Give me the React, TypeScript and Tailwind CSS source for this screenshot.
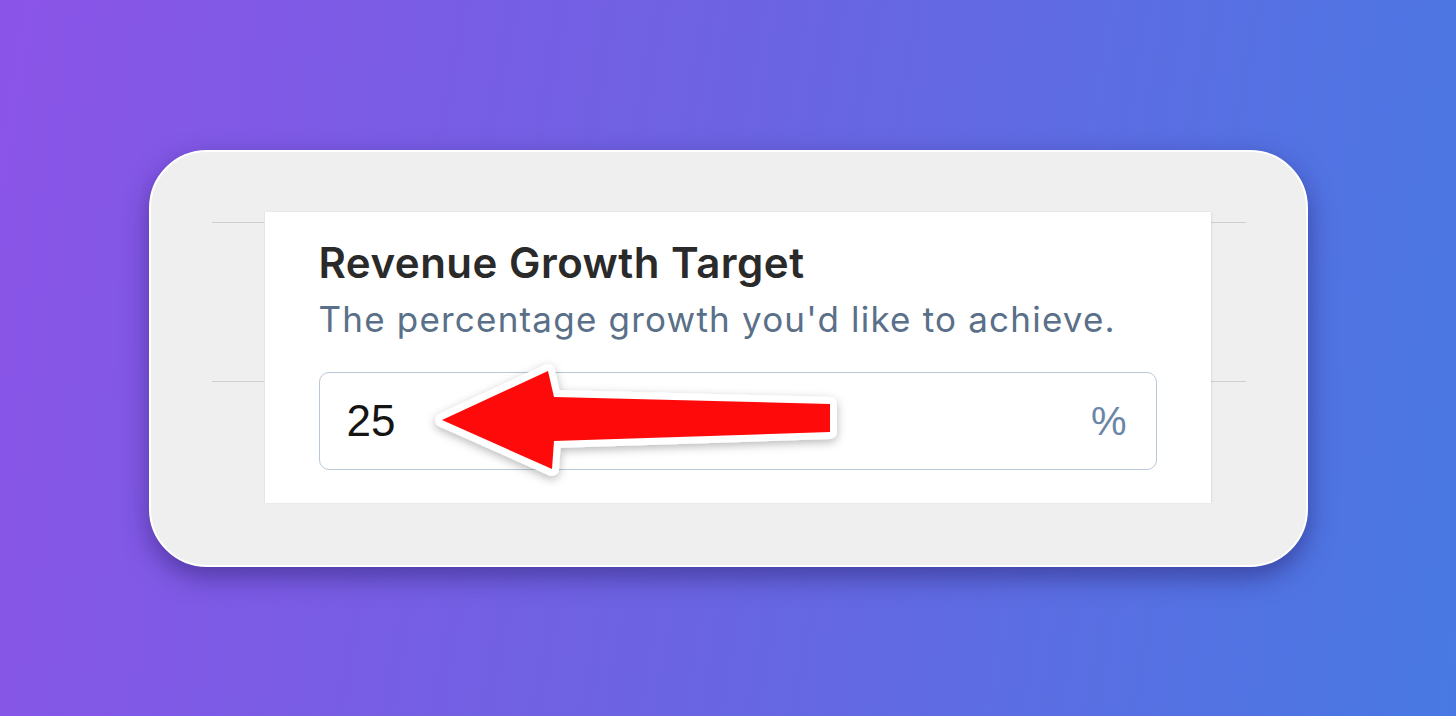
import React from "react";

const font = { fontFamily: "Inter, 'Noto Sans', sans-serif" };

function Arrow() {
  // Red callout arrow pointing at the value in the field.
  return (
    <svg
      className="pointer-events-none absolute left-[160px] top-[145px]"
      width="430"
      height="130"
      viewBox="0 0 430 130"
      aria-hidden="true"
    >
      <defs>
        <filter id="arrow-shadow" x="-20%" y="-40%" width="140%" height="180%">
          <feDropShadow dx="0" dy="3" stdDeviation="5" floodColor="#000" floodOpacity="0.28" />
        </filter>
      </defs>
      <path
        d="M17 63 L123 14 L129 40 L405 47 L405 75 L129 84 L127 112 Z"
        fill="#ff0a0a"
        stroke="#ffffff"
        strokeWidth="14"
        strokeLinejoin="round"
        filter="url(#arrow-shadow)"
      />
      <path d="M17 63 L123 14 L129 40 L405 47 L405 75 L129 84 L127 112 Z" fill="#ff0a0a" />
    </svg>
  );
}

function Gutter({ width, className }: { width: number; className?: string }) {
  return (
    <div className={className}>
      <div className="mt-[10px] h-px bg-[#cfcfcf]" style={{ width }} />
      <div className="mt-[158px] h-px bg-[#cfcfcf]" style={{ width }} />
    </div>
  );
}

export default function App() {
  return (
    <div className="flex h-[716px] w-full items-center justify-center bg-[linear-gradient(100deg,#8b54e8_0%,#6b64e2_50%,#4879e3_100%)]">
      <div className="h-[417px] w-[1159px] rounded-[58px] border-2 border-white bg-[#efefef] shadow-[0_10px_26px_rgba(35,25,100,0.5)]">
        <div className="flex pt-[60px]">
          <div className="flex w-[113px] justify-end">
            <Gutter width={52} />
          </div>
          <div className="relative h-[291px] w-[947px] border-l border-[#dfe6ec] bg-white px-[54px] pt-[26px] shadow-[1px_0_2px_rgba(0,0,0,0.08)]" style={font}>
            <h2 className="text-[42px] leading-[50px] font-semibold tracking-[0.5px] text-[#2a2a2a]">
              Revenue Growth Target
            </h2>
            <p className="mt-[10px] text-[35px] leading-[42px] tracking-[1.2px] text-[#5a6f88]">
              The percentage growth you'd like to achieve.
            </p>
            <div className="mt-[32px] flex h-[98px] w-[838px] items-center justify-between rounded-[10px] border-[1.5px] border-[#b9c8d7] pl-[27px] pr-[29px]">
              <span className="text-[44px] text-[#141414]" style={{ fontFamily: "'Liberation Sans', Arial, sans-serif" }}>
                25
              </span>
              <span className="text-[40px] text-[#6a86a6]" style={{ fontFamily: "'Liberation Sans', Arial, sans-serif" }}>
                %
              </span>
            </div>
            <Arrow />
          </div>
          <Gutter width={35} />
        </div>
      </div>
    </div>
  );
}
